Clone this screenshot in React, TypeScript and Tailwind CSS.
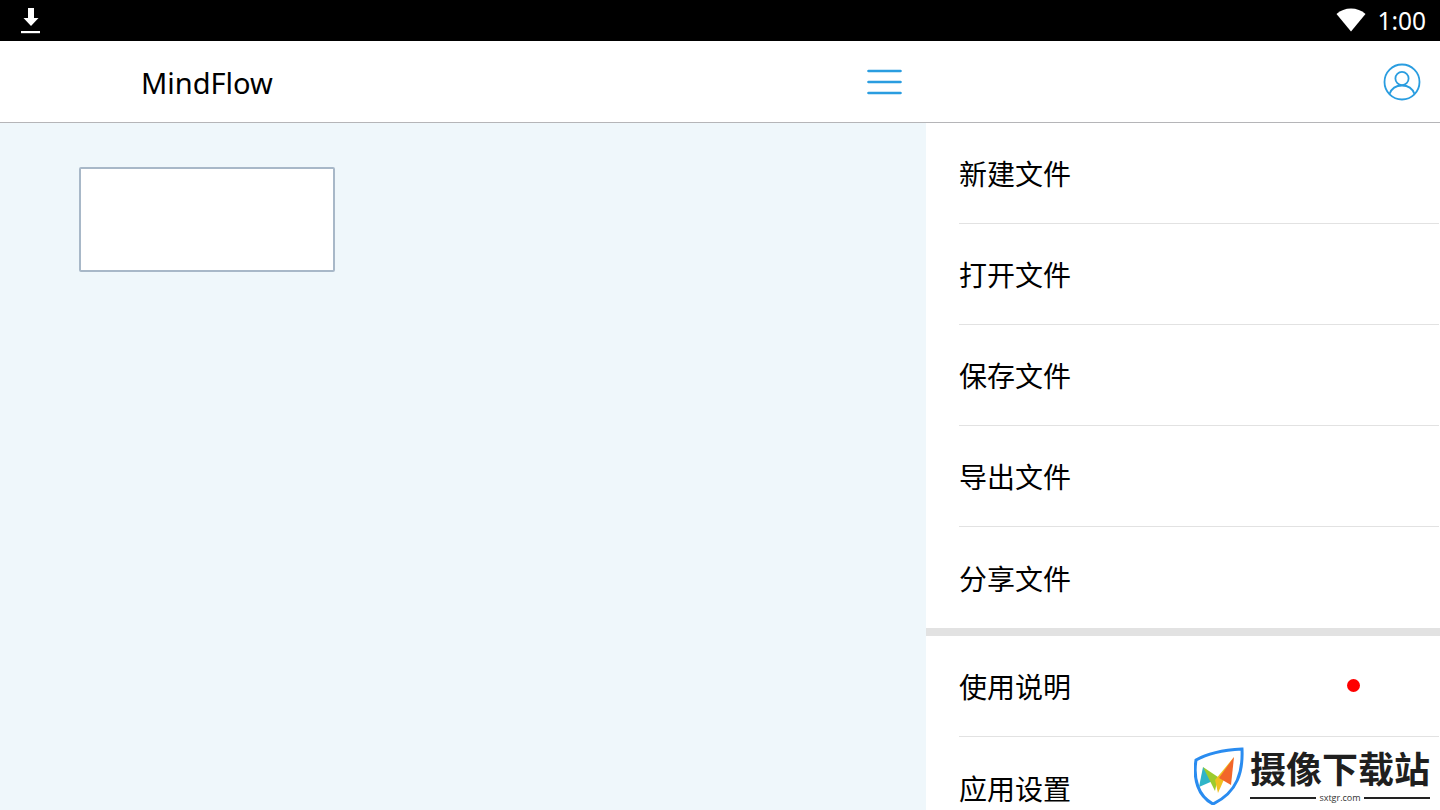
import React from 'react';

const CJK = "font-['Noto_Sans','Noto_Sans_CJK_SC',sans-serif]";

const GROUP_ONE = ['新建文件', '打开文件', '保存文件', '导出文件', '分享文件'];

const MenuRow: React.FC<{ label: string; last?: boolean; dot?: boolean }> = ({ label, last, dot }) => (
  <div className="relative pl-[33px] pr-px">
    <div className={`flex h-[101px] items-center text-[28px] leading-none text-black ${last ? '' : 'border-b border-[#e2e2e2]'}`}>
      <span className="mt-[2px]">{label}</span>
    </div>
    {dot && <div className="absolute left-[421px] top-[43px] h-[13px] w-[13px] rounded-full bg-[#fe0000]" />}
  </div>
);

const Watermark: React.FC = () => (
  <div className="absolute left-[1194px] top-[747px] flex items-start">
    <svg width="50" height="58" viewBox="0 0 50 58">
      <path d="M2 13 C14 6 30 3 48 2 C49 24 44 45 19 57 C4 49 -1 32 2 13 Z" fill="#fff" stroke="#2a8cf0" strokeWidth="3" />
      <path d="M5 40 L9 20 L21 33 Z" fill="#2fb4c8" />
      <path d="M9 20 L24 30 L21 44 Z" fill="#9ccb2c" />
      <path d="M21 33 L40 10 L24 46 Z" fill="#f0c020" />
      <path d="M40 10 L37 38 L25 31 Z" fill="#f2662a" />
    </svg>
    <div className="ml-[6px] flex w-[180px] flex-col">
      <div className="h-[40px] whitespace-nowrap font-['Noto_Sans_CJK_SC',sans-serif] text-[36px] font-bold leading-[40px] text-[#1f1f1f]">
        摄像下载站
      </div>
      <div className="mt-[6px] flex items-center gap-[3px]">
        <div className="h-[1.5px] flex-1 bg-[#222]" />
        <span className="font-['Open_Sans',sans-serif] text-[9px] leading-[10px] text-[#333]">sxtgr.com</span>
        <div className="h-[1.5px] flex-1 bg-[#222]" />
      </div>
    </div>
  </div>
);

const App: React.FC = () => {
  return (
    <div className={`relative flex h-[810px] w-[1440px] flex-col overflow-hidden bg-white ${CJK}`}>
      {/* status bar */}
      <div className="flex h-[41px] items-center justify-between bg-black pl-[21px] pr-[14px] text-white">
        <svg width="20" height="27" viewBox="0 0 20 27" fill="white">
          <path d="M7 1 H13 V11 H17.5 L10 19 L2.5 11 H7 Z" />
          <rect x="0" y="24" width="19" height="2.2" />
        </svg>
        <div className="flex items-center gap-[11px]">
          <svg width="30" height="24" viewBox="0 0 30 24" fill="white" className="mt-[-1px]">
            <path d="M15 23.5 L0.5 6 C4.5 2.6 9.5 0.6 15 0.6 C20.5 0.6 25.5 2.6 29.5 6 Z" />
          </svg>
          <span className="mt-[2px] font-['Noto_Sans',sans-serif] text-[24.5px] leading-none">1:00</span>
        </div>
      </div>

      {/* header */}
      <div className="relative flex h-[82px] items-center border-b border-[#b5b5b8] bg-white pl-[141px]">
        <span className="mt-[1px] text-[29px] leading-none text-black">MindFlow</span>
        <svg width="36" height="26" viewBox="0 0 36 26" className="absolute left-[866px] top-[28px]" stroke="#2a9de0" strokeWidth="2.6" strokeLinecap="round">
          <path d="M2.5 2 H34.5 M2.5 13 H34.5 M2.5 24 H34.5" />
        </svg>
        <svg width="38" height="38" viewBox="0 0 38 38" fill="none" className="absolute left-[1383px] top-[22px]" stroke="#2a9de0" strokeWidth="1.8">
          <circle cx="19" cy="19" r="17.5" />
          <circle cx="19" cy="15.5" r="6.6" />
          <path d="M6.5 31 C8.5 25.5 13 22.5 19 22.5 C25 22.5 29.5 25.5 31.5 31" />
        </svg>
      </div>

      {/* body */}
      <div className="flex min-h-0 flex-1">
        <div className="w-[926px] bg-[#eff7fb] pl-[79px] pt-[44px]">
          <div className="h-[105px] w-[256px] rounded-[2px] border-2 border-[#a8b8c8] bg-white" />
        </div>
        <div className="w-[514px] bg-white">
          {GROUP_ONE.map((label, i) => (
            <MenuRow key={label} label={label} last={i === GROUP_ONE.length - 1} />
          ))}
          <div className="h-[8px] bg-[#e2e2e2]" />
          <MenuRow label="使用说明" dot />
          <MenuRow label="应用设置" last />
        </div>
      </div>

      <Watermark />
    </div>
  );
};

export default App;
